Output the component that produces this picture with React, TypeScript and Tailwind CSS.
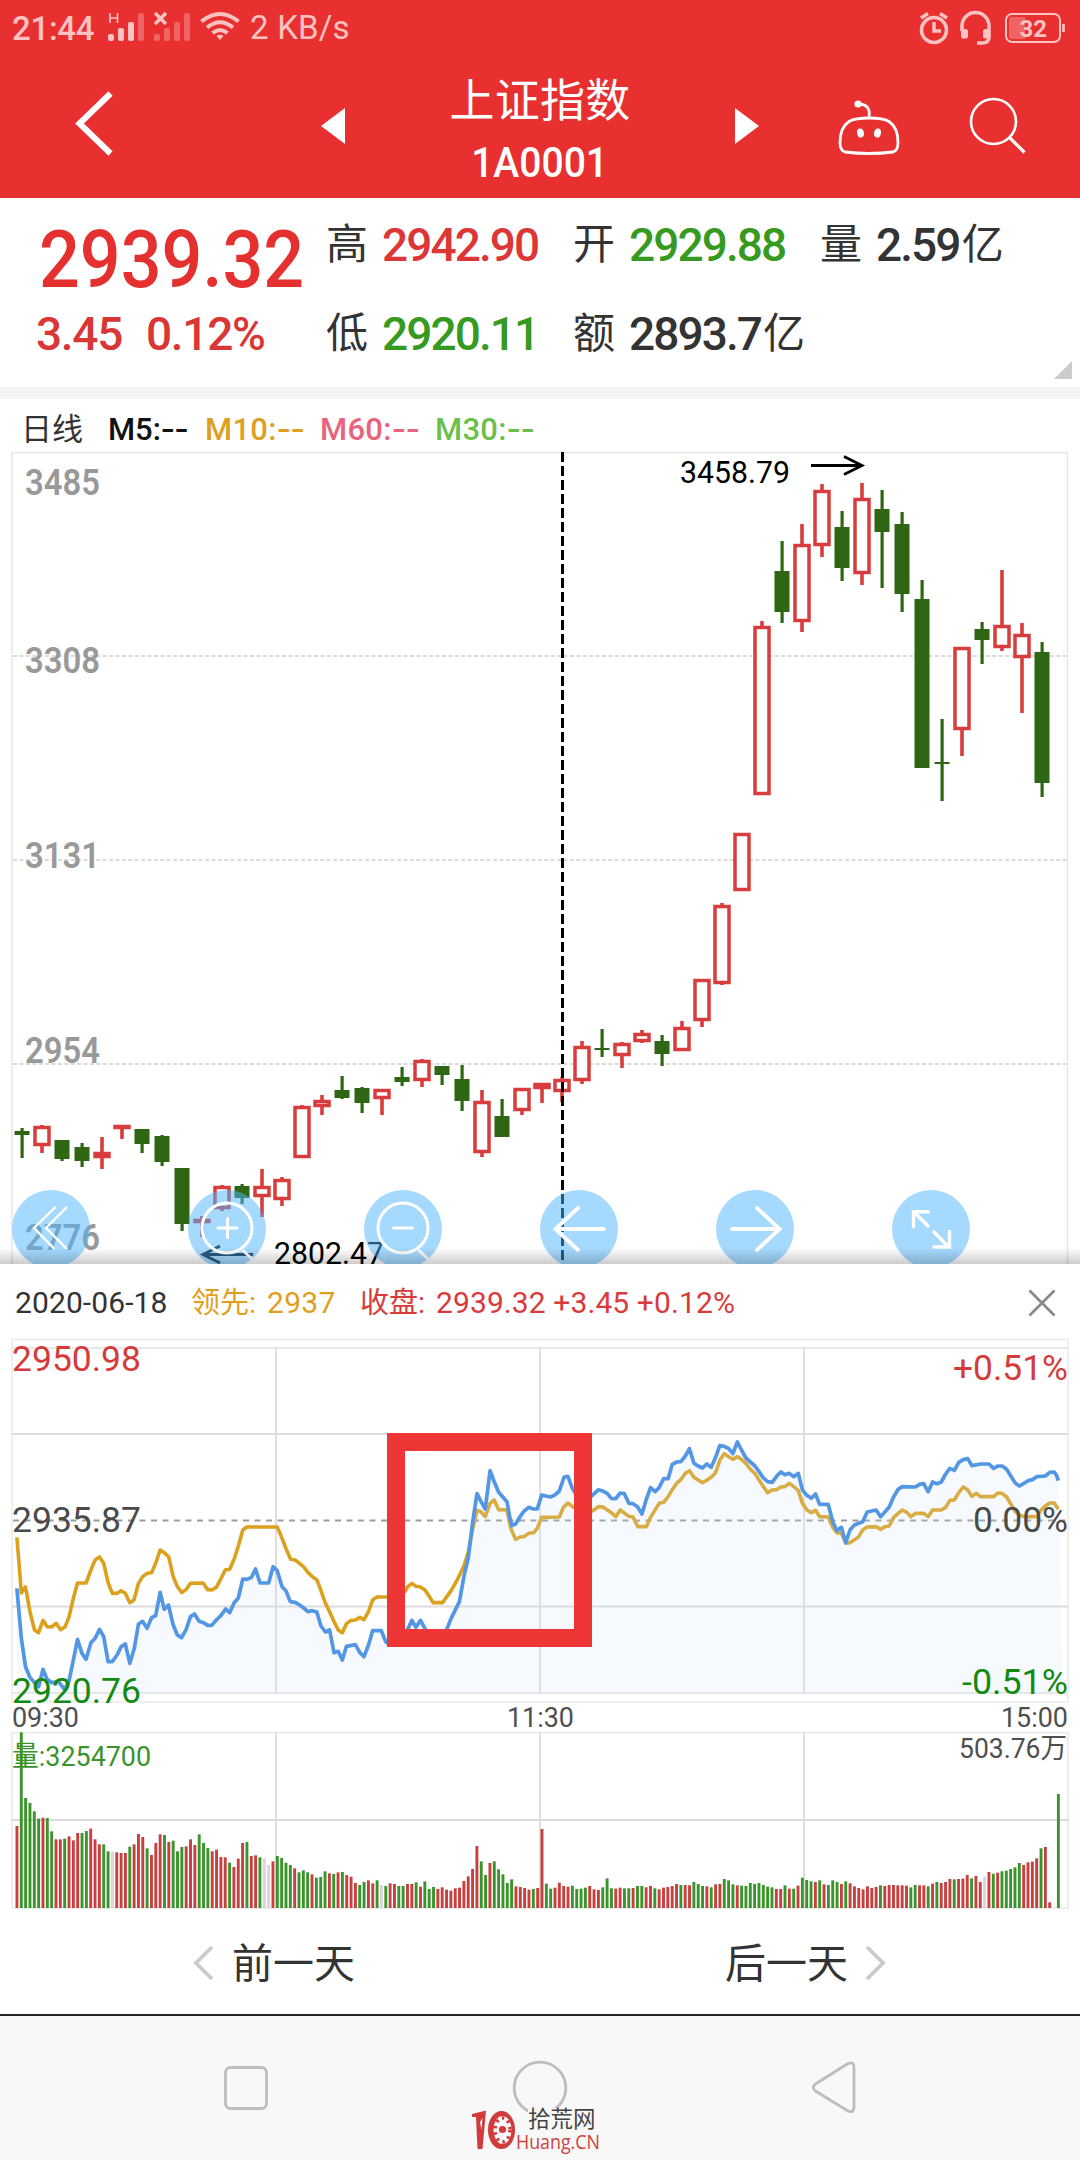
import type { ReactNode } from "react"

const FONT = "font-['Roboto','Noto_Sans_CJK_SC',sans-serif]"

const RED = "#d83c3c"
const GREEN = "#2f6613"

// [direction, high, body top, body bottom, low]
type Candle = ["up" | "down", number, number, number, number]

const candles: Candle[] = [
  ["down", 1128, 1131, 1135, 1158], ["up", 1125, 1126, 1146, 1153], ["down", 1140, 1140, 1159, 1161],
  ["down", 1143, 1147, 1161, 1167], ["up", 1137, 1152, 1158, 1169], ["up", 1125, 1125, 1129, 1139],
  ["down", 1129, 1129, 1144, 1153], ["down", 1135, 1136, 1162, 1166], ["down", 1168, 1168, 1224, 1231],
  ["up", 1216, 1219, 1223, 1237], ["up", 1185, 1186, 1209, 1211], ["down", 1184, 1186, 1198, 1204],
  ["up", 1169, 1186, 1197, 1217], ["up", 1177, 1179, 1200, 1206], ["up", 1105, 1106, 1158, 1158],
  ["up", 1095, 1100, 1107, 1115], ["down", 1076, 1090, 1098, 1099], ["down", 1087, 1088, 1103, 1113],
  ["up", 1089, 1089, 1099, 1115], ["down", 1067, 1077, 1082, 1086], ["up", 1059, 1060, 1081, 1087],
  ["down", 1066, 1066, 1075, 1085], ["down", 1065, 1079, 1101, 1111], ["up", 1090, 1101, 1153, 1157],
  ["down", 1099, 1116, 1137, 1137], ["up", 1088, 1088, 1111, 1115], ["up", 1083, 1083, 1089, 1103],
  ["up", 1077, 1079, 1092, 1102], ["up", 1041, 1046, 1081, 1084], ["down", 1029, 1048, 1050, 1057],
  ["up", 1042, 1043, 1056, 1068], ["up", 1030, 1033, 1042, 1043], ["down", 1035, 1041, 1054, 1066],
  ["up", 1021, 1027, 1051, 1051], ["up", 979, 979, 1021, 1027], ["up", 903, 905, 984, 985],
  ["up", 833, 833, 891, 891], ["up", 621, 626, 795, 795], ["down", 541, 571, 612, 623],
  ["up", 524, 544, 622, 632], ["up", 484, 490, 546, 557], ["down", 511, 527, 568, 581],
  ["up", 483, 498, 574, 585], ["down", 490, 509, 532, 588], ["down", 512, 524, 594, 612],
  ["down", 580, 599, 768, 768], ["down", 719, 762, 764, 801], ["up", 647, 647, 730, 756],
  ["down", 622, 629, 640, 664], ["up", 570, 625, 648, 651], ["up", 623, 634, 658, 713],
  ["down", 642, 652, 783, 797],
]

// Intraday plots run over 3136 units, noon falls at 1568
const NOON = 1568

const priceAm = "49,805 62,955 74,1040 87,1072 100,1088 112,1100 125,1048 137,1078 150,1088 170,1085 187,1108 200,1085 213,1020 225,958 238,1000 250,1018 264,968 276,955 289,928 301,950 314,1025 326,1025 340,1005 352,980 364,972 377,1030 390,985 402,912 414,904 427,925 440,893 452,887 465,817 477,868 489,855 503,915 515,945 527,953 540,930 553,890 565,882 578,904 591,908 603,916 615,916 628,900 642,886 655,867 667,878 680,848 692,834 705,777 717,778 730,772 742,747 755,789 780,789 793,740 805,752 819,800 830,812 843,845 857,847 870,855 882,864 894,875 907,872 920,876 932,918 945,936 957,930 970,998 982,994 994,1020 1006,979 1032,974 1045,998 1057,1010 1070,975 1082,932 1107,932 1120,965 1133,975 1160,950 1184,928 1196,901 1208,922 1221,901 1234,926 1260,960 1285,950 1298,926 1310,895 1334,845 1347,770 1360,712 1372,610 1385,521 1397,545 1409,567 1423,452 1435,485 1448,517 1472,545 1480,590 1486,617 1497,612 1510,590 1522,573 1536,562 1548,567 1560,567"
const pricePm = "5,525 17,528 30,531 42,526 56,513 70,471 81,469 94,505 108,530 130,545 152,526 170,509 182,513 195,520 207,535 220,536 233,519 245,521 258,550 270,551 283,560 296,582 308,540 321,503 334,515 346,503 359,476 372,476 384,433 397,426 409,425 422,408 434,386 447,430 459,438 472,444 484,432 497,442 510,412 522,377 535,379 548,386 560,401 573,366 585,390 598,414 611,426 624,438 636,455 648,473 661,485 674,487 687,469 699,456 711,464 723,460 737,470 750,460 762,510 775,526 788,535 800,522 812,553 837,553 850,605 862,632 875,622 888,668 900,630 913,615 937,605 950,576 976,570 989,590 1002,575 1014,561 1027,530 1040,508 1052,500 1090,501 1102,493 1114,491 1127,515 1140,486 1152,491 1165,486 1178,462 1190,445 1203,451 1216,427 1229,419 1242,416 1254,437 1280,432 1304,432 1317,445 1330,438 1342,438 1355,448 1367,468 1380,489 1392,498 1405,490 1418,482 1430,479 1442,470 1467,468 1480,457 1493,456 1500,466 1505,482"

const leadAm = "49,652 56,740 62,819 74,801 87,875 100,930 112,938 125,901 137,920 150,921 163,910 176,929 189,920 200,892 213,835 225,789 250,789 264,750 276,720 289,711 301,730 314,788 326,820 340,820 352,812 364,820 377,848 389,840 402,790 414,770 427,760 440,758 452,730 465,690 477,698 490,711 503,770 515,800 528,818 540,809 553,790 590,789 603,809 615,810 628,802 642,775 654,750 667,748 680,717 693,675 705,630 717,621 805,621 819,655 832,690 844,718 857,720 870,730 882,741 894,757 907,770 920,779 932,812 945,850 957,875 970,905 982,930 994,938 1006,911 1019,901 1032,900 1045,892 1057,899 1070,875 1082,840 1095,831 1150,831 1176,815 1184,800 1196,790 1208,799 1221,801 1234,810 1247,830 1258,848 1285,848 1310,812 1330,775 1347,738 1360,695 1372,630 1385,571 1397,576 1409,590 1423,550 1435,540 1448,569 1472,570 1484,628 1497,658 1510,651 1522,650 1535,640 1550,638 1560,625"
const leadPm = "5,592 56,591 68,562 81,549 97,562 125,580 152,573 170,560 183,561 207,578 220,590 233,570 258,589 270,591 284,620 309,620 321,592 346,550 359,547 372,530 384,509 397,490 409,479 422,460 434,452 447,472 459,480 472,488 484,481 497,472 510,458 522,421 535,401 548,410 560,418 573,410 585,418 598,430 611,448 624,460 636,480 649,500 661,518 674,510 687,509 699,501 711,500 724,490 737,500 750,512 762,550 775,570 788,578 800,571 812,590 837,591 850,622 862,638 875,640 888,670 900,668 924,652 937,630 950,621 976,620 989,628 1002,620 1014,618 1027,592 1040,580 1052,570 1065,577 1077,590 1090,580 1114,580 1127,590 1140,570 1165,570 1178,562 1190,541 1203,540 1216,518 1229,501 1242,510 1254,529 1266,520 1280,530 1317,530 1330,519 1342,520 1355,531 1367,552 1380,575 1392,585 1405,590 1442,590 1455,570 1467,558 1480,549 1493,549 1505,568"

function joinSessions(am: string, pm: string) {
  const shifted = pm.split(" ").map(p => {
    const [x, y] = p.split(",").map(Number)
    return `${x + NOON},${y}`
  })
  return [am, ...shifted].join(" ")
}

const price = joinSessions(priceAm, pricePm)
const lead = joinSessions(leadAm, leadPm)

// One bar per minute: colour letter (R up, G down, N flat) and the bar's top
const volume = "R378 G97 G294 G309 G334 G356 R353 G354 G394 R418 R418 G416 R409 R421 R399 G399 G393 R386 R418 R433 G433 G454 N455 R457 R459 R459 G440 R433 R402 R411 G445 R465 R429 R403 G405 R426 G422 G454 G441 R439 R418 R435 G403 G429 G444 R454 R449 R471 R472 G488 R501 R476 R429 G426 R468 R466 G472 N475 N495 R484 G468 G474 G488 G495 R505 G517 G511 G517 R523 G533 G531 G514 R520 G522 R517 G516 R525 R530 R549 G555 G546 R541 R550 G541 N555 G558 R550 R552 G558 G558 R552 R552 G547 R560 G544 G567 G561 R567 R562 R569 R572 R565 R563 R543 R529 R507 R438 G484 G525 R489 G484 G508 G523 G549 G538 R559 R561 R564 R569 G567 R564 R387 G551 G566 R563 R548 R558 R560 G557 G567 G566 G563 R558 R568 R570 G562 G535 G565 R566 R563 G565 G565 R564 G558 G558 R562 R558 G565 R568 R563 R561 R558 R552 G555 R555 R556 G546 G552 G558 R559 G562 R553 R552 G537 G541 G553 R556 G557 G558 G549 G552 G549 G555 G560 G562 R567 R567 G556 R566 G566 R557 G533 G540 G544 R546 G541 R553 G555 G541 G546 R552 G544 R550 R559 R564 R568 R559 R564 R561 G556 R558 R555 R555 R556 R556 R557 G562 G555 R556 R556 G559 R551 G546 R549 R546 R537 G538 R537 R536 R525 G535 R528 R546 N530 R516 G521 R518 G514 G512 G507 G502 G489 R495 R487 R485 R475 G445 R441 R607 N624 G282".split(" ")

const volumeColors: Record<string, string> = { R: "#c83f3f", G: "#3a942b", N: "#d9d5d8" }

function Label({ x, y, w, size, fill, weight = 400, children }: {
  x: number; y: number; w: number; size: number; fill: string; weight?: number; children: ReactNode
}) {
  return (
    <text x={x} y={y} textLength={w} lengthAdjust="spacingAndGlyphs" fontSize={size} fill={fill} fontWeight={weight}>
      {children}
    </text>
  )
}

function StatusBar() {
  return (
    <div className="flex h-[56px] items-center text-[#ffc2c2]">
      <span className="ml-3 w-[95px] text-[33px] font-medium leading-none tracking-[-0.3px]">21:44</span>
      <svg width="134" height="34" viewBox="107 10 134 34" fill="#ffc2c2" className="-mt-0.5">
        <path d="M110 13v10M117.500 13v10M110 18h7.500" stroke="#ffc2c2" strokeWidth="1.600" />
        <rect x="108" y="34" width="6" height="7" rx="2" />
        <rect x="118" y="28" width="6" height="13" rx="2" />
        <rect x="128" y="22" width="6" height="19" rx="2" />
        <g fill="#ef6464">
          <rect x="138" y="13" width="6" height="28" rx="2" />
          <rect x="154" y="34" width="6" height="7" rx="2" />
          <rect x="164" y="28" width="6" height="13" rx="2" />
          <rect x="174" y="22" width="6" height="19" rx="2" />
          <rect x="184" y="13" width="6" height="28" rx="2" />
        </g>
        <path d="M155 13l11 11M166 13l-11 11" stroke="#ffc2c2" strokeWidth="3.500" />
        <g fill="none" stroke="#ffc2c2" strokeWidth="4">
          <path d="M201.500 21.500q18.500-15 37 0" />
          <path d="M207 27.500q13-10.500 26 0" />
          <path d="M212.500 33q7.500-6 15 0" />
        </g>
        <path d="M216.500 36q3.500-2.500 7 0l-3.500 4z" />
      </svg>
      <span className="-mt-0.5 ml-[9px] text-[33px] leading-none tracking-[0.2px]">2 KB/s</span>

      <svg width="150" height="38" viewBox="917 8 150 38" fill="none" stroke="#ffc2c2" className="ml-auto mr-[13px]">
        <circle cx="934" cy="29" r="12.500" strokeWidth="3.600" />
        <path d="M921 17l7-4.500M947 17l-7-4.500" strokeWidth="3.500" />
        <path d="M934 21v9h7" strokeWidth="3.400" />
        <path d="M962 30v-5a13.500 13.500 0 0 1 27 0v11q0 6-7 6h-5" strokeWidth="3.600" />
        <rect x="961" y="28" width="7" height="9.500" rx="2.500" fill="#ffc2c2" stroke="none" />
        <rect x="983" y="28" width="7" height="9.500" rx="2.500" fill="#ffc2c2" stroke="none" />
        <rect x="1006" y="13" width="54" height="28" rx="6" strokeWidth="2" />
        <path d="M1012 16h13v22h-13q-3 0-3-3V19q0-3 3-3z" fill="#ef6464" stroke="none" />
        <path d="M1063.500 23v8" strokeWidth="2.600" />
        <text x="1019.500" y="36" fontSize="24" fontWeight="700" fill="#ffc2c2" stroke="none">32</text>
      </svg>
    </div>
  )
}

function Header() {
  return (
    <header className="h-[198px] bg-[#e83030] text-white">
      <StatusBar />
      <div className="flex h-[142px] items-start">
        <svg width="40" height="70" viewBox="75 88 40 70" className="ml-[75px] mt-[32px]">
          <path d="M110.500 93.500L79.500 123.500L110.500 153.500" fill="none" stroke="#fff" strokeWidth="6" />
        </svg>
        <svg width="26" height="36" viewBox="0 0 26 36" className="ml-[205px] mt-[52px]">
          <path d="M25 0v36L1 18z" fill="#fff" />
        </svg>
        <div className="ml-[74px] flex w-[240px] flex-col items-center">
          <h1 className="mt-[23px] text-[45px] leading-[45px] tracking-[0.3px]">上证指数</h1>
          <span className="mt-[18px] scale-x-[0.93] text-[42px] font-medium leading-[41px]">1A0001</span>
        </div>
        <svg width="26" height="36" viewBox="0 0 26 36" className="ml-[75px] mt-[52px]">
          <path d="M0 0v36L24 18z" fill="#fff" />
        </svg>
        <svg width="64" height="60" viewBox="838 98 64 60" fill="none" stroke="#fff" strokeWidth="2.800" className="ml-[76px] mt-[42px]">
          <path d="M870 118q-14 0-20 3.500q-9 6-9 21q0 8 5 9.500q24 3 48 0q5-1.500 5-9.500q0-15-9-21q-6-3.500-20-3.500z" />
          <path d="M859 104q13 0 11 13" />
          <circle cx="859" cy="104" r="3.600" fill="#fff" stroke="none" />
          <ellipse cx="861.500" cy="133" rx="3.400" ry="4.600" fill="#fff" stroke="none" transform="rotate(-12 861.500 133)" />
          <ellipse cx="878.500" cy="133" rx="3.400" ry="4.600" fill="#fff" stroke="none" transform="rotate(12 878.500 133)" />
        </svg>
        <svg width="60" height="60" viewBox="969 96 60 60" fill="none" stroke="#fff" strokeWidth="2.600" className="ml-[67px] mt-[40px]">
          <circle cx="994.500" cy="121.500" r="22.500" />
          <path d="M1010.500 137.500l15 15" strokeWidth="3.200" />
        </svg>
      </div>
    </header>
  )
}

function Stat({ label, value, unit, color = "text-[#333]" }: {
  label: string; value: string; unit?: string; color?: string
}) {
  return (
    <div className="flex h-[89px] items-center leading-none">
      <span className="w-[56px] text-[42px] text-[#333]">{label}</span>
      <span className={`text-[46px] font-medium tracking-[-1.9px] ${color}`}>{value}</span>
      {unit && <span className="ml-0.5 text-[42px] text-[#333]">{unit}</span>}
    </div>
  )
}

function Quote() {
  return (
    <section className="relative flex h-[189px] bg-white">
      <div className="w-[326px] leading-none text-[#e53030]">
        <div className="ml-[39px] mt-[23px] origin-left scale-x-[0.91] text-[79px] font-medium leading-[79px]">2939.32</div>
        <div className="ml-[36px] mt-[11px] flex text-[46px] font-medium leading-[46px] tracking-[-1.3px] text-[#d93636]">
          <span className="w-[110px]">3.45</span>
          <span>0.12%</span>
        </div>
      </div>
      <div className="mt-[2px] grid h-[178px] grid-cols-[247px_247px_auto]">
        <Stat label="高" value="2942.90" color="text-[#dc3636]" />
        <Stat label="开" value="2929.88" color="text-[#369a20]" />
        <Stat label="量" value="2.59" unit="亿" />
        <Stat label="低" value="2920.11" color="text-[#369a20]" />
        <Stat label="额" value="2893.7" unit="亿" />
      </div>
      <svg width="18" height="18" className="absolute bottom-2 right-2">
        <path d="M18 0v18H0z" fill="#cbcbcb" />
      </svg>
    </section>
  )
}

function Average({ name, className }: { name: string; className: string }) {
  return (
    <span className={className}>
      {name}:<span className="inline-block origin-left scale-x-[1.3]">--</span>
    </span>
  )
}

function Legend() {
  return (
    <div className="flex h-[52px] items-center pt-2 text-[31px] font-medium leading-none">
      <span className="ml-[21px] w-[87px] font-normal text-[#333]">日线</span>
      <Average name="M5" className="w-[97px] text-[#111]" />
      <Average name="M10" className="w-[115px] tracking-[0.3px] text-[#dda023]" />
      <Average name="M60" className="w-[115px] tracking-[0.3px] text-[#e8637b]" />
      <Average name="M30" className="tracking-[0.3px] text-[#6cbf4d]" />
    </div>
  )
}

function DailyChart() {
  return (
    <svg width="1080" height="813" viewBox="0 451 1080 813" className="block">
      <path d="M12 1264V452.500H1067.500V1264" fill="none" stroke="#e6e6e6" strokeWidth="1.500" />
      {[656, 860, 1064].map(y => (
        <line key={y} x1="13" x2="1067" y1={y} y2={y} stroke="#dadada" strokeWidth="1.800" strokeDasharray="4 2.400" />
      ))}

      <Label x={25} y={495} w={75} size={36} fill="#999" weight={600}>3485</Label>
      <Label x={25} y={673} w={75} size={36} fill="#999" weight={600}>3308</Label>
      <Label x={25} y={868} w={75} size={36} fill="#999" weight={600}>3131</Label>
      <Label x={25} y={1063} w={75} size={36} fill="#999" weight={600}>2954</Label>
      <Label x={25} y={1250} w={75} size={36} fill="#999" weight={600}>2776</Label>

      {candles.map(([dir, high, top, bottom, low], i) => {
        const x = 22 + i * 20
        if (dir === "down") {
          return (
            <g key={i} fill={GREEN}>
              <rect x={x - 1.5} y={high} width={3.2} height={low - high} />
              <rect x={x - 7.5} y={top} width={15} height={bottom - top} />
            </g>
          )
        }
        return (
          <g key={i}>
            <rect x={x - 1.8} y={high} width={3.6} height={low - high} fill={RED} />
            <rect x={x - 7} y={top + 1.5} width={14} height={Math.max(bottom - top - 3, 1)} fill="#fff" stroke={RED} strokeWidth="3.500" />
          </g>
        )
      })}

      {/* Selected day */}
      <line x1="562.500" x2="562.500" y1="452" y2="1260" stroke="#000" strokeWidth="3" strokeDasharray="10 4" />

      <Label x={680} y={483} w={110} size={31} fill="#000">3458.79</Label>
      <path d="M811 465.500h50M844 456.500l18 9l-18 9" fill="none" stroke="#000" strokeWidth="2.800" />
      <Label x={274} y={1264} w={110} size={31} fill="#000">2802.47</Label>
      <path d="M253 1254.500h-49M220 1246l-17 8.500l17 8.500" fill="none" stroke="#000" strokeWidth="2.800" />

      {/* Chart controls */}
      <g fill="#4bb3fd" fillOpacity="0.5">
        {[51, 227, 403, 579, 755, 931].map(cx => <circle key={cx} cx={cx} cy="1229" r="39" />)}
      </g>
      <g fill="none" stroke="#fff" strokeWidth="3" strokeLinecap="round">
        <path d="M55 1207.500L34 1228L54 1248.500M66.500 1207.500L46 1228L66.500 1248.500" strokeWidth="2.400" />
        <circle cx="227" cy="1228" r="25" />
        <path d="M243.500 1251l7.500 7M218 1228h19M227.500 1218.500v19" />
        <circle cx="403" cy="1228" r="25" />
        <path d="M419.500 1251l7.500 7M393.500 1228h19" />
        <path d="M604 1229H556M578 1208l-22.500 21L578 1250" strokeWidth="3.800" />
        <path d="M732 1229h48M757 1208l22.500 21L757 1250" strokeWidth="3.800" />
        <path d="M928 1226l-14-14M928.500 1211.700h-15v15M934 1232l14.500 15M949.500 1231.500v15.500h-15.500" strokeWidth="3.400" />
      </g>
      <defs>
        <linearGradient id="sheetShadow" x1="0" x2="0" y1="0" y2="1">
          <stop offset="0" stopColor="#000" stopOpacity="0" />
          <stop offset="1" stopColor="#000" stopOpacity="0.200" />
        </linearGradient>
      </defs>
      <rect x="0" y="1248" width="1080" height="16" fill="url(#sheetShadow)" />
    </svg>
  )
}

function IntradayChart() {
  return (
    <svg width="1080" height="394" viewBox="0 1338 1080 394" className="block overflow-visible">
      <path d="M12 1339.500H1068V1702H12z" fill="none" stroke="#ebebeb" strokeWidth="1.500" />
      <path d="M12 1348H1068M12 1693H1068" stroke="#e8e8e8" strokeWidth="2" />
      <path d="M12 1434H1068M12 1606.500H1068M276 1348V1693M540 1348V1693M804 1348V1693" stroke="#dcdcdc" strokeWidth="1.800" />
      <path d="M13 1520.500H1067" stroke="#9b9b9b" strokeWidth="1.800" strokeDasharray="6 5.500" />

      <svg x="0" y="1320" width="1080" height="410" viewBox="0 0 3136 1230" preserveAspectRatio="none" fill="none" strokeLinejoin="round">
        <polyline points={lead} stroke="#dba11d" strokeWidth="3.600" vectorEffect="non-scaling-stroke" />
        <polygon points={`49,1118 ${price} 3085,1118`} fill="#cde1f8" fillOpacity="0.180" />
        <polyline points={price} stroke="#5396e3" strokeWidth="3.700" vectorEffect="non-scaling-stroke" />
      </svg>

      <Label x={12} y={1371} w={129} size={35} fill="#d63b3b">2950.98</Label>
      <Label x={12} y={1532} w={129} size={35} fill="#4a4a4a">2935.87</Label>
      <Label x={12} y={1702.5} w={129} size={35} fill="#128a12">2920.76</Label>
      <Label x={953} y={1380} w={115} size={35} fill="#d63b3b">+0.51%</Label>
      <Label x={973} y={1532} w={95} size={35} fill="#4a4a4a">0.00%</Label>
      <Label x={962} y={1693.5} w={106} size={35} fill="#128a12">-0.51%</Label>
      <Label x={12} y={1727} w={67} size={28} fill="#4f4f4f">09:30</Label>
      <Label x={507} y={1727} w={67} size={28} fill="#4f4f4f">11:30</Label>
      <Label x={1001} y={1727} w={67} size={28} fill="#4f4f4f">15:00</Label>
    </svg>
  )
}

function VolumeChart() {
  return (
    <svg width="1080" height="177" viewBox="0 1732 1080 177" className="block">
      <path d="M12 1732.500H1068V1908H12z" fill="none" stroke="#e8e8e8" strokeWidth="1.600" />
      <path d="M12 1820H1068M276 1732V1908M540 1732V1908M804 1732V1908" stroke="#dcdcdc" strokeWidth="1.800" />
      <Label x={12} y={1766} w={139} size={28} fill="#3a942b">量:3254700</Label>
      <Label x={959} y={1757.5} w={108} size={28} fill="#4f4f4f">503.76万</Label>
      <svg x="0" y="1732" width="1080" height="176" viewBox="0 96 3136 528" preserveAspectRatio="none">
        {volume.map((bar, i) => {
          const top = Number(bar.slice(1))
          return <rect key={i} x={45 + i * 12.6} y={top} width={8.4} height={624 - top} fill={volumeColors[bar[0]]} />
        })}
      </svg>
    </svg>
  )
}

function DayPanel() {
  return (
    <section className="relative bg-white">
      <div className="flex h-[74px] items-center pt-1 text-[30px] leading-none">
        <span className="ml-[15px] w-[176px] tracking-[0.1px] text-[#333]">2020-06-18</span>
        <span className="w-[76px] text-[29px] text-[#e09f1b]">领先:</span>
        <span className="w-[93px] tracking-[0.3px] text-[#e09f1b]">2937</span>
        <span className="w-[76px] text-[29px] text-[#d93a3a]">收盘:</span>
        <span className="tracking-[0.1px] text-[#d93a3a]">2939.32 +3.45 +0.12%</span>
        <svg width="30" height="30" viewBox="0 0 30 30" className="ml-auto mr-[23px]">
          <path d="M2.500 2.500l25 25M27.500 2.500l-25 25" stroke="#8a8a8a" strokeWidth="2.800" />
        </svg>
      </div>
      <IntradayChart />
      <VolumeChart />

      {/* Highlighted move before noon */}
      <div className="absolute left-[387px] top-[169px] h-[214px] w-[205px] border-[18px] border-[#ee3636]" />

      <div className="flex h-[105px] items-center text-[41px] leading-none text-[#333]">
        <svg width="22" height="38" viewBox="0 0 22 38" className="ml-[192px] mt-0.5">
          <path d="M20 3L4 19l16 16" fill="none" stroke="#cacaca" strokeWidth="3.800" />
        </svg>
        <span className="ml-[18px] mt-[5px] w-[493px]">前一天</span>
        <span className="mt-[5px] w-[123px]">后一天</span>
        <svg width="22" height="38" viewBox="0 0 22 38" className="ml-[17px] mt-0.5">
          <path d="M2 3l16 16L2 35" fill="none" stroke="#cacaca" strokeWidth="3.800" />
        </svg>
      </div>
    </section>
  )
}

function SystemNav() {
  return (
    <nav className="relative h-[146px] border-t-2 border-[#222] bg-[#f8f8f8]">
      <svg width="1080" height="144" viewBox="0 2016 1080 144" fill="none" stroke="#bdbdbd" strokeWidth="2.800" className="block">
        <rect x="225.500" y="2067.500" width="41" height="41" rx="5" />
        <circle cx="540" cy="2088" r="25.800" />
        <path d="M848 2063.500L815.500 2084Q811 2087.500 815.500 2091L848 2111Q854 2113.500 854 2107V2067.500Q854 2061 848 2063.500z" />
      </svg>
      <div className="absolute left-[471px] top-[92px] flex">
        <svg width="45" height="42" viewBox="471 2108 45 42">
          <path d="M472 2114l14-3.500l-3.500 38.500h-5l-1.500-32h-4z" fill="#d23b3b" />
          <path d="M480 2122l2.500-4l-1 12z" fill="#f8f8f8" />
          <ellipse cx="501.500" cy="2130" rx="13.500" ry="19" fill="#d23b3b" />
          <ellipse cx="502.500" cy="2130" rx="9" ry="14" fill="#f8f8f8" />
          <ellipse cx="502.500" cy="2130" rx="7.500" ry="12" fill="none" stroke="#d23b3b" strokeWidth="3.500" strokeDasharray="2.500 4" />
          <circle cx="502.500" cy="2129.500" r="3.600" fill="#d23b3b" />
        </svg>
        <div className="leading-none">
          <div className="ml-[12px] bg-[#f8f8f8] text-[22.5px] leading-[23px] text-[#444]">拾荒网</div>
          <div className="origin-left scale-x-[0.87] font-['Open_Sans','Noto_Sans',sans-serif] text-[20.5px] leading-[21px] text-[#cf4040]">Huang.CN</div>
        </div>
      </div>
    </nav>
  )
}

export default function App() {
  return (
    <main className={`${FONT} h-[2160px] w-[1080px] overflow-hidden bg-white`}>
      <Header />
      <Quote />
      <div className="h-3 bg-[#f4f4f4]" />
      <Legend />
      <DailyChart />
      <DayPanel />
      <SystemNav />
    </main>
  )
}
